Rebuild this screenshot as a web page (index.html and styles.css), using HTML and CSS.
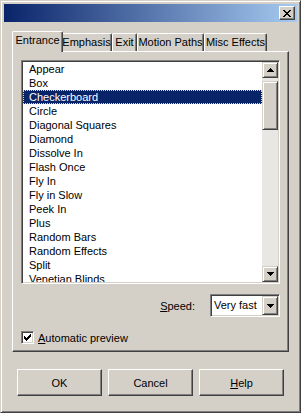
FILE: index.html
```html
<!DOCTYPE html>
<html>
<head>
<meta charset="utf-8">
<link rel="stylesheet" href="styles.css">
</head>
<body>
<div class="window">
  <div class="titlebar">
    <div class="close-btn">
      <svg width="8" height="7" viewBox="0 0 8 7" shape-rendering="crispEdges">
        <rect x="0" y="0" width="2" height="1"/><rect x="6" y="0" width="2" height="1"/>
        <rect x="1" y="1" width="2" height="1"/><rect x="5" y="1" width="2" height="1"/>
        <rect x="2" y="2" width="4" height="1"/>
        <rect x="3" y="3" width="2" height="1"/>
        <rect x="2" y="4" width="4" height="1"/>
        <rect x="1" y="5" width="2" height="1"/><rect x="5" y="5" width="2" height="1"/>
        <rect x="0" y="6" width="2" height="1"/><rect x="6" y="6" width="2" height="1"/>
      </svg>
    </div>
  </div>
  <div class="content">
    <div class="tabs">
      <div class="tab selected tab-entrance">Entrance</div>
      <div class="tab tab-emphasis">Emphasis</div>
      <div class="tab tab-exit">Exit</div>
      <div class="tab tab-motion">Motion Paths</div>
      <div class="tab tab-misc">Misc Effects</div>
    </div>
    <div class="panel">
      <div class="listbox">
        <ul class="items">
          <li>Appear</li>
          <li>Box</li>
          <li class="selected">Checkerboard</li>
          <li>Circle</li>
          <li>Diagonal Squares</li>
          <li>Diamond</li>
          <li>Dissolve In</li>
          <li>Flash Once</li>
          <li>Fly In</li>
          <li>Fly in Slow</li>
          <li>Peek In</li>
          <li>Plus</li>
          <li>Random Bars</li>
          <li>Random Effects</li>
          <li>Split</li>
          <li>Venetian Blinds</li>
        </ul>
        <div class="scrollbar">
          <div class="sb-btn">
            <svg width="7" height="4" viewBox="0 0 7 4" shape-rendering="crispEdges"><rect x="3" y="0" width="1" height="1"/><rect x="2" y="1" width="3" height="1"/><rect x="1" y="2" width="5" height="1"/><rect x="0" y="3" width="7" height="1"/></svg>
          </div>
          <div class="sb-track"><div class="sb-thumb"></div></div>
          <div class="sb-btn">
            <svg width="7" height="4" viewBox="0 0 7 4" shape-rendering="crispEdges"><rect x="0" y="0" width="7" height="1"/><rect x="1" y="1" width="5" height="1"/><rect x="2" y="2" width="3" height="1"/><rect x="3" y="3" width="1" height="1"/></svg>
          </div>
        </div>
      </div>
      <div class="speed-row">
        <span class="speed-label"><u>S</u>peed:</span>
        <div class="combo">
          <span class="combo-value">Very fast</span>
          <div class="combo-btn">
            <svg width="7" height="4" viewBox="0 0 7 4" shape-rendering="crispEdges"><rect x="0" y="0" width="7" height="1"/><rect x="1" y="1" width="5" height="1"/><rect x="2" y="2" width="3" height="1"/><rect x="3" y="3" width="1" height="1"/></svg>
          </div>
        </div>
      </div>
      <div class="check-row">
        <span class="checkbox">
          <svg width="7" height="7" viewBox="0 0 7 7" shape-rendering="crispEdges">
            <rect x="6" y="0" width="1" height="1"/>
            <rect x="5" y="1" width="2" height="1"/>
            <rect x="0" y="2" width="1" height="1"/><rect x="4" y="2" width="3" height="1"/>
            <rect x="0" y="3" width="2" height="1"/><rect x="3" y="3" width="3" height="1"/>
            <rect x="0" y="4" width="5" height="1"/>
            <rect x="1" y="5" width="3" height="1"/>
            <rect x="2" y="6" width="1" height="1"/>
          </svg>
        </span>
        <span class="check-label"><u>A</u>utomatic preview</span>
      </div>
    </div>
    <div class="buttons">
      <div class="btn">OK</div>
      <div class="btn">Cancel</div>
      <div class="btn"><u>H</u>elp</div>
    </div>
  </div>
</div>
</body>
</html>
```

FILE: styles.css
```css
* { box-sizing: border-box; margin: 0; padding: 0; }
html, body { width: 301px; height: 413px; overflow: hidden; background: #d4d0c8; }
body { font-family: "Liberation Sans", Arial, sans-serif; font-size: 11px; color: #000; }

.window {
  width: 301px; height: 413px; background: #d4d0c8;
  border: 1px solid; border-color: #d4d0c8 #404040 #404040 #d4d0c8;
  box-shadow: inset 1px 1px #fff, inset -1px -1px #808080;
  padding: 3px;
  display: flex; flex-direction: column;
}

.titlebar {
  height: 18px; flex: none;
  background: linear-gradient(to right, #0a246a, #a6caf0);
  display: flex; align-items: center; justify-content: flex-end;
  padding-right: 2px;
}
.close-btn {
  width: 16px; height: 14px; background: #d4d0c8;
  border: 1px solid; border-color: #fff #404040 #404040 #fff;
  box-shadow: inset -1px -1px #808080;
  display: flex; align-items: center; justify-content: center;
  padding-right: 1px;
}
.close-btn svg, .sb-btn svg, .combo-btn svg, .checkbox svg { display: block; fill: #000; }

.content { flex: 1; display: flex; flex-direction: column; padding: 9px 8px 0; }

.tabs { display: flex; align-items: flex-end; height: 20px; padding-left: 2px; position: relative; z-index: 1; }
.tab {
  height: 18px; flex: none;
  border-top: 1px solid #fff; border-left: 1px solid #fff; border-right: 1px solid #404040;
  box-shadow: inset -1px 0 #808080;
  border-radius: 2px 2px 0 0;
  background: #d4d0c8;
  text-align: center; line-height: 16px; white-space: nowrap;
}
.tab.selected {
  height: 21px; margin: 0 -2px -1px; position: relative; z-index: 2;
  line-height: 17px;
}
.tab-entrance { width: 51px; }
.tab-emphasis { width: 51px; }
.tab-exit { width: 25px; }
.tab-motion { width: 67px; }
.tab-misc { width: 63px; }

.panel {
  height: 301px; flex: none;
  border: 1px solid; border-color: #fff #404040 #404040 #fff;
  box-shadow: inset -1px -1px #808080;
  padding: 8px;
  display: flex; flex-direction: column;
}

.listbox {
  height: 224px; flex: none; background: #fff;
  border: 1px solid; border-color: #808080 #fff #fff #808080;
  box-shadow: inset 1px 1px #404040, inset -1px -1px #d4d0c8;
  padding: 1px;
  display: flex;
}
.items { list-style: none; flex: 1; overflow: hidden; }
.items li { height: 14px; line-height: 14px; padding-left: 6px; white-space: nowrap; }
.items li.selected { background: #0a246a; color: #fff; outline: 1px dotted #f0d8a0; outline-offset: -1px; }

.scrollbar { width: 16px; flex: none; display: flex; flex-direction: column; background: #e9e7e3; }
.sb-btn {
  height: 16px; flex: none; background: #d4d0c8;
  border: 1px solid; border-color: #d4d0c8 #404040 #404040 #d4d0c8;
  box-shadow: inset 1px 1px #fff, inset -1px -1px #808080;
  display: flex; align-items: center; justify-content: center;
}
.sb-track { flex: 1; padding-top: 3px; }
.sb-thumb {
  height: 49px; background: #d4d0c8;
  border: 1px solid; border-color: #d4d0c8 #404040 #404040 #d4d0c8;
  box-shadow: inset 1px 1px #fff, inset -1px -1px #808080;
}

.speed-row { display: flex; align-items: center; justify-content: flex-end; gap: 15px; margin-top: 10px; height: 23px; }
.speed-label { white-space: nowrap; }
.combo {
  width: 70px; height: 23px; background: #fff;
  border: 1px solid; border-color: #808080 #fff #fff #808080;
  box-shadow: inset 1px 1px #404040, inset -1px -1px #d4d0c8;
  padding: 1px;
  display: flex; align-items: stretch;
}
.combo-value { flex: 1; padding-left: 2px; line-height: 19px; white-space: nowrap; }
.combo-btn {
  width: 16px; flex: none; background: #d4d0c8;
  border: 1px solid; border-color: #d4d0c8 #404040 #404040 #d4d0c8;
  box-shadow: inset 1px 1px #fff, inset -1px -1px #808080;
  display: flex; align-items: center; justify-content: center;
}

.check-row { display: flex; align-items: center; gap: 4px; margin-top: 14px; height: 13px; }
.checkbox {
  width: 13px; height: 13px; flex: none; background: #fff;
  border: 1px solid; border-color: #808080 #fff #fff #808080;
  box-shadow: inset 1px 1px #404040, inset -1px -1px #d4d0c8;
  display: flex; align-items: center; justify-content: center;
}
.check-label { white-space: nowrap; }

.buttons { display: flex; justify-content: center; gap: 6px; margin-top: 17px; }
.btn {
  width: 85px; height: 27px; background: #d4d0c8;
  border: 1px solid; border-color: #fff #404040 #404040 #fff;
  box-shadow: inset -1px -1px #808080;
  display: flex; align-items: center; justify-content: center;
}
```
